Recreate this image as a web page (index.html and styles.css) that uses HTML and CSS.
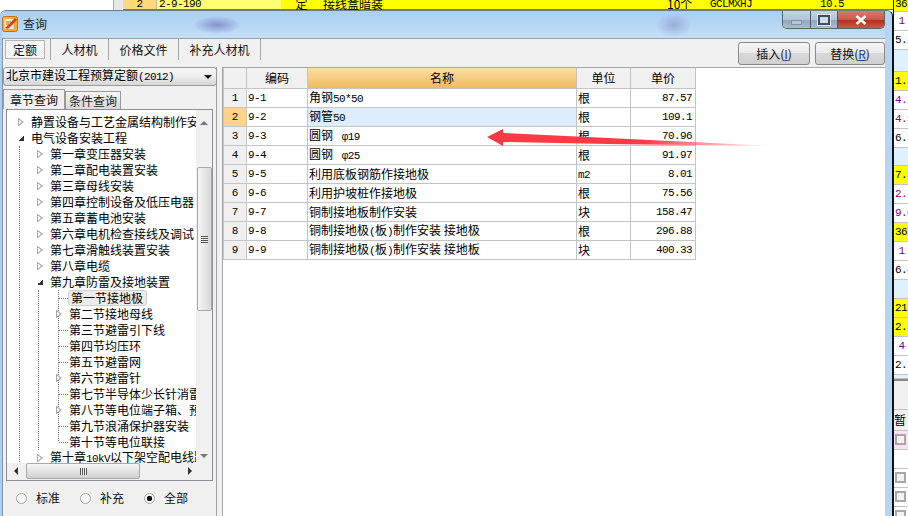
FILE: index.html
```html
<!DOCTYPE html>
<html lang="zh-CN">
<head>
<meta charset="utf-8">
<title>查询</title>
<link rel="stylesheet" href="styles.css">
</head>
<body>
<div class="page">
  <div class="main">
    <div class="bgrow">
      <div class="bg-white"></div>
      <div class="bg-gray"></div>
      <div class="bg-yellow">
        <span class="b1 m">2</span><span class="b2 m">2-9-190</span><span class="b3">定</span><span class="b4">接线盒暗装</span><span class="b5">10个</span><span class="b6 m">GCLMXHJ</span><span class="b7 m">10.5</span>
      </div>
    </div>
    <div class="window">
      <div class="titlebar">
        <svg class="appicon" width="16" height="16" viewBox="0 0 16 16">
          <rect x="0.5" y="0.5" width="15" height="15" rx="2" fill="#f6ab35" stroke="#c07414"/>
          <rect x="2.5" y="3" width="9" height="10" fill="#fdeccb"/>
          <path d="M3 12 L13 2 L15 4 L6 13Z" fill="#d8431c"/>
          <path d="M4 6h5M4 8h3" stroke="#b86a10"/>
        </svg>
        <span class="title">查询</span>
        <div class="controls">
          <div class="ctl ctl-min"><i class="minbar"></i></div>
          <div class="ctl ctl-max"><i class="maxbox"></i></div>
          <div class="ctl ctl-close">
            <svg width="12" height="10" viewBox="0 0 12 10"><path d="M1.5 1 L10.5 9 M10.5 1 L1.5 9" stroke="#fff" stroke-width="2.6"/></svg>
          </div>
        </div>
      </div>
      <div class="client">
        <div class="toolbar">
          <div class="tabs">
            <div class="tab tab-on"><span class="focus">定额</span></div>
            <div class="tab t2">人材机</div>
            <div class="tab t3">价格文件</div>
            <div class="tab t4">补充人材机</div>
          </div>
          <div class="actions">
            <button class="btn b-ins">插入(<u>I</u>)</button>
            <button class="btn b-rep">替换(<u>R</u>)</button>
          </div>
        </div>
        <div class="content">
          <div class="left">
            <div class="combo"><span>北京市建设工程预算定额<b class="n">(2012)</b></span><i class="caret"></i></div>
            <div class="subtabs">
              <div class="subtab subtab-on">章节查询</div>
              <div class="subtab">条件查询</div>
            </div>
            <div class="treebox">
              <div class="treetop">
                <div class="tree">
                  <div class="row"><i class="tri"></i><span>静置设备与工艺金属结构制作安装工程</span></div>
                  <div class="row"><i class="tri open"></i><span>电气设备安装工程</span></div>
                  <div class="group">
                    <div class="row"><i class="tri"></i><span>第一章变压器安装</span></div>
                    <div class="row"><i class="tri"></i><span>第二章配电装置安装</span></div>
                    <div class="row"><i class="tri"></i><span>第三章母线安装</span></div>
                    <div class="row"><i class="tri"></i><span>第四章控制设备及低压电器</span></div>
                    <div class="row"><i class="tri"></i><span>第五章蓄电池安装</span></div>
                    <div class="row"><i class="tri"></i><span>第六章电机检查接线及调试</span></div>
                    <div class="row"><i class="tri"></i><span>第七章滑触线装置安装</span></div>
                    <div class="row"><i class="tri"></i><span>第八章电缆</span></div>
                    <div class="row"><i class="tri open"></i><span>第九章防雷及接地装置</span></div>
                    <div class="group g2">
                      <div class="g3">
                        <div class="row"><i class="leaf"></i><span class="sel">第一节接地极</span></div>
                        <div class="row"><i class="tri"></i><span>第二节接地母线</span></div>
                        <div class="row"><i class="leaf"></i><span>第三节避雷引下线</span></div>
                        <div class="row"><i class="leaf"></i><span>第四节均压环</span></div>
                        <div class="row"><i class="leaf"></i><span>第五节避雷网</span></div>
                        <div class="row"><i class="tri"></i><span>第六节避雷针</span></div>
                        <div class="row"><i class="leaf"></i><span>第七节半导体少长针消雷装置</span></div>
                        <div class="row"><i class="tri"></i><span>第八节等电位端子箱、预埋</span></div>
                        <div class="row"><i class="leaf"></i><span>第九节浪涌保护器安装</span></div>
                        <div class="row"><i class="leaf"></i><span>第十节等电位联接</span></div>
                      </div>
                    </div>
                    <div class="row"><i class="tri"></i><span>第十章<b class="n">10kV</b>以下架空配电线路</span></div>
                  </div>
                </div>
                <div class="vscroll">
                  <i class="arr-up"></i>
                  <div class="vthumb"><i class="grip-h"></i></div>
                  <i class="arr-down"></i>
                </div>
              </div>
              <div class="hscroll">
                <i class="arr-left"></i>
                <div class="hthumb"><i class="grip-v"></i></div>
                <i class="arr-right"></i>
              </div>
            </div>
            <div class="radios">
              <label class="radio"><i class="dot"></i>标准</label>
              <label class="radio"><i class="dot"></i>补充</label>
              <label class="radio"><i class="dot dot-on"></i>全部</label>
            </div>
          </div>
          <div class="tablepanel">
            <table class="grid">
              <colgroup><col class="c0"><col class="c1"><col class="c2"><col class="c3"><col class="c4"></colgroup>
              <thead>
                <tr><th></th><th>编码</th><th class="th-on">名称</th><th>单位</th><th>单价</th></tr>
              </thead>
              <tbody>
                <tr><td class="no">1</td><td class="m">9-1</td><td>角钢<b class="n">50*50</b></td><td>根</td><td class="pr">87.57</td></tr>
                <tr class="cur"><td class="no">2</td><td class="m">9-2</td><td class="nm">钢管<b class="n">50</b></td><td>根</td><td class="pr">109.1</td></tr>
                <tr><td class="no">3</td><td class="m">9-3</td><td>圆钢 <b class="n">&nbsp;φ19</b></td><td>根</td><td class="pr">70.96</td></tr>
                <tr><td class="no">4</td><td class="m">9-4</td><td>圆钢 <b class="n">&nbsp;φ25</b></td><td>根</td><td class="pr">91.97</td></tr>
                <tr><td class="no">5</td><td class="m">9-5</td><td>利用底板钢筋作接地极</td><td><b class="n">m2</b></td><td class="pr">8.01</td></tr>
                <tr><td class="no">6</td><td class="m">9-6</td><td>利用护坡桩作接地极</td><td>根</td><td class="pr">75.56</td></tr>
                <tr><td class="no">7</td><td class="m">9-7</td><td>铜制接地板制作安装</td><td>块</td><td class="pr">158.47</td></tr>
                <tr><td class="no">8</td><td class="m">9-8</td><td>铜制接地极<b class="n">(</b>板<b class="n">)</b>制作安装 接地极</td><td>根</td><td class="pr">296.88</td></tr>
                <tr><td class="no">9</td><td class="m">9-9</td><td>铜制接地极<b class="n">(</b>板<b class="n">)</b>制作安装 接地板</td><td>块</td><td class="pr">400.33</td></tr>
              </tbody>
            </table>
          </div>
        </div>
      </div>
    </div>
  </div>
  <div class="side">
    <div class="s h10 y">36</div>
    <div class="s h19 p c">1</div>
    <div class="s h19">5.2</div>
    <div class="s h22 lb"></div>
    <div class="s h19 y">1.5</div>
    <div class="s h19 p">4.1</div>
    <div class="s h19 p">4.5</div>
    <div class="s h19">6.5</div>
    <div class="s h18 lb"></div>
    <div class="s h19 y">7.8</div>
    <div class="s h19 p">2.7</div>
    <div class="s h19 p">9.0</div>
    <div class="s h19 y">36</div>
    <div class="s h19 p c">1</div>
    <div class="s h19">6.4</div>
    <div class="s h19 lb"></div>
    <div class="s h19 y">21</div>
    <div class="s h19 y">2.3</div>
    <div class="s h19 p c">4</div>
    <div class="s h19">2.7</div>
    <div class="s h4 lb"></div>
    <div class="s gap"></div>
    <div class="s ztxt">暂</div>
    <div class="s h19 pink"><i class="chk"></i></div>
    <div class="s h19"></div>
    <div class="s h19"><i class="chk"></i></div>
    <div class="s h19"><i class="chk"></i></div>
    <div class="s h19"><i class="chk"></i></div>
  </div>
  <svg class="arrow" width="908" height="516" viewBox="0 0 908 516">
    <defs>
      <linearGradient id="fade" x1="487" y1="0" x2="772" y2="0" gradientUnits="userSpaceOnUse">
        <stop offset="0" stop-color="#ff3a44"/>
        <stop offset="0.55" stop-color="#ff3a44"/>
        <stop offset="1" stop-color="#ff3a44" stop-opacity="0"/>
      </linearGradient>
    </defs>
    <polygon points="487,137 503,129 503,133 608,138 772,146 608,144 503,142 503,146" fill="url(#fade)"/>
  </svg>
</div>
</body>
</html>
```

FILE: styles.css
```css
* { box-sizing: border-box; }
html, body { margin: 0; padding: 0; }
body { width: 908px; height: 516px; overflow: hidden; background: #fff; color: #000;
  font: 12px/16px "Noto Sans CJK SC", "Liberation Sans", sans-serif; }
.m, .n { font-family: "Liberation Mono", monospace; font-size: 11px; letter-spacing: -0.6px; font-weight: 400; }
.page { position: relative; display: flex; width: 908px; height: 516px; overflow: hidden; }
.main { width: 893px; display: flex; flex-direction: column; }

.bgrow { display: flex; height: 10px; overflow: hidden; flex: none; }
.bg-white { width: 113px; }
.bg-gray { width: 10px; background: #e8e8e8; border-left: 1px solid #aaa; }
.bg-yellow { flex: 1; background: #ffff66; line-height: 8px; display: flex; white-space: nowrap; border-bottom: 1px solid #777; }
.bg-yellow span { display: block; }
.b1 { width: 33px; text-align: center; background: #ffd97a; }
.b2 { width: 125px; padding-left: 2px; background: #ffff70; border-left: 1px solid #bbb; }
.b3 { width: 41px; text-align: center; background: #ffff00; }
.b4 { width: 345px; padding-left: 1px; background: #ffff00; }
.b5 { width: 43px; background: #ffff00; }
.b6 { width: 80px; background: #ffff00; }
.b7 { flex: 1; text-align: right; padding-right: 49px; background: #ffff00; }

.window { flex: 1; min-height: 0; display: flex; flex-direction: column; padding: 0 7px 0 2px; overflow: hidden;
  border-radius: 6px 6px 0 0; border-top: 1px solid #6f7a86; border-right: 1px solid #111;
  background: linear-gradient(90deg, #aacff2 0, #bcd8f4 60%, #b5d5f5 100%); }
.titlebar { height: 27px; flex: none; display: flex; align-items: center;
  background:
    radial-gradient(ellipse 24px 9px at 215px 14px, rgba(90,90,170,.55), transparent),
    radial-gradient(ellipse 18px 12px at 672px 14px, rgba(110,110,180,.4), transparent),
    linear-gradient(180deg, #a9cff2, #c4ddf6); }
.appicon { margin: 0 5px 1px 0; flex: none; }
.title { color: #222; margin-bottom: 2px; }
.controls { margin-left: auto; display: flex; height: 18px; align-self: flex-start; border: 1px solid #566; border-top: 0; border-radius: 0 0 5px 5px; overflow: hidden; }
.ctl { height: 100%; display: flex; align-items: center; justify-content: center; }
.ctl-min { width: 28px; background: linear-gradient(180deg, #c3d5e8 0, #b0c4da 50%, #8fa6bf 51%, #a8bdd3 100%); border-right: 1px solid #556; }
.ctl-max { width: 27px; background: linear-gradient(180deg, #c3d5e8 0, #b0c4da 50%, #8fa6bf 51%, #a8bdd3 100%); border-right: 1px solid #556; }
.ctl-close { width: 46px; background: linear-gradient(180deg, #d87a6c 0, #cd5a4c 50%, #b22c1e 51%, #cc5a48 100%); }
.minbar { width: 11px; height: 5px; margin-top: 5px; border: 1px solid #7e92a8; background: #b5c6d8; }
.maxbox { width: 12px; height: 10px; border: 2px solid #3e4c5c; background: #cfdce8; box-shadow: 0 0 0 1px #dde6ef; }

.client { flex: 1; min-height: 0; background: #f0f0f0; border-left: 1px solid #8b95a0; display: flex; flex-direction: column; }
.toolbar { height: 29px; flex: none; display: flex; justify-content: space-between; border-top: 1px solid #9aa3ad; }
.tabs { display: flex; padding-top: 0; height: 22px; align-items: stretch; }
.tab { display: flex; align-items: center; justify-content: center; border-right: 1px solid #a8a8a8; height: 21px; color: #111; }
.tab-on { width: 48px; padding-left: 2px; justify-content: flex-start; background: #f0f0f0; }
.focus { display: block; width: 40px; height: 19px; text-align: center; line-height: 18px; border: 1px solid #b4b4b4; background: repeating-conic-gradient(#fff 0 25%, #ececec 0 50%) 0 0 / 2px 2px; }
.t2 { width: 58px; }
.t3 { width: 70px; }
.t4 { width: 82px; }
.actions { display: flex; gap: 5px; padding-top: 3px; }
.btn { height: 23px; padding: 0; border: 1px solid #8a8a8a; border-radius: 3px; font: inherit; color: #111;
  background: linear-gradient(180deg, #f4f4f4 0, #ebebeb 48%, #d8d8d8 50%, #cfcfcf 100%); }
.btn u { color: #1a3f9a; }
.b-ins { width: 72px; }
.b-rep { width: 70px; }

.content { flex: 1; min-height: 0; display: flex; gap: 5px; }
.left { width: 214px; flex: none; display: flex; flex-direction: column; border-right: 1px solid #a0a0a0; }
.combo { height: 19px; flex: none; margin-right: -1px; border: 1px solid #9a9a9a; border-radius: 3px; display: flex; align-items: center; justify-content: space-between; padding: 0 4px 2px 2px;
  background: linear-gradient(180deg, #f6f6f6 0, #ececec 50%, #d6d6d6 100%); white-space: nowrap; }
.caret { width: 0; height: 0; margin-top: 2px; border: 4px solid transparent; border-top: 4px solid #111; border-bottom: 0; }
.subtabs { display: flex; margin: 3px 0 0 0; height: 20px; flex: none; align-items: flex-end; }
.subtab { width: 56px; height: 18px; text-align: center; line-height: 18px; border: 1px solid #9a9a9a; border-bottom: 0; background: linear-gradient(180deg, #f4f4f4, #d8d8d8); color: #222; }
.subtab-on { width: 62px; height: 20px; background: #f0f0f0; line-height: 19px; color: #111; }
.treebox { margin: 0 3px 0 3px; height: 372px; flex: none; border: 1px solid #8e8e96; background: #fff; display: flex; flex-direction: column; }
.treetop { flex: 1; min-height: 0; display: flex; }
.tree { flex: 1; min-width: 0; padding-top: 4px; overflow: hidden; background: #fff; }
.row { display: flex; align-items: center; height: 16px; padding-left: 11px; white-space: nowrap; flex: none; }
.group .row { padding-left: 17px; }
.group { margin-left: 12px; border-left: 1px dotted #777; }
.g2 { margin-left: 18px; }
.g3 { margin-left: 19px; padding-left: 1px; background: repeating-linear-gradient(180deg, #777 0 1px, transparent 1px 2px) no-repeat 0 0 / 1px calc(100% - 8px); }
.group .g3 .row { padding-left: 0; }
.tri { flex: none; position: relative; width: 6px; height: 9px; margin-right: 7px; background: #a8a8a8; clip-path: polygon(0 0, 100% 50%, 0 100%); }
.tri::after { content: ""; position: absolute; left: 1px; top: 2px; width: 3px; height: 5px; background: #fff; clip-path: polygon(0 0, 100% 50%, 0 100%); }
.g3 .tri { margin-left: -3px; }
.tri.open { width: 6px; height: 6px; background: linear-gradient(135deg, transparent 50%, #333 50%); clip-path: none; }
.tri.open::after { display: none; }
.leaf { flex: none; width: 9px; margin-right: 1px; border-top: 1px dotted #777; }
.sel { margin-left: -1px; padding: 0 3px 0 2px; height: 16px; line-height: 14px; background: #ececec; border: 1px solid #cfcfcf; border-radius: 3px; }
.vscroll { width: 16px; flex: none; background: #f0f0f0; position: relative; }
.vthumb { position: absolute; left: 1px; right: 0; top: 57px; height: 144px; border: 1px solid #a8a8a8; border-radius: 2px; background: linear-gradient(90deg, #f6f6f6, #d8d8d8); display: flex; align-items: center; justify-content: center; }
.grip-h { width: 7px; height: 7px; background: repeating-linear-gradient(180deg, #555 0 1px, #eee 1px 2px); }
.arr-up, .arr-down { position: absolute; left: 4px; width: 0; height: 0; border: 4px solid transparent; }
.arr-up { top: 11px; border-bottom: 4px solid #777; border-top: 0; }
.arr-down { bottom: 5px; border-top: 4px solid #777; border-bottom: 0; }
.hscroll { height: 17px; flex: none; background: #f0f0f0; position: relative; }
.hthumb { position: absolute; left: 19px; width: 114px; top: 0; height: 16px; border: 1px solid #a8a8a8; border-radius: 2px; background: linear-gradient(180deg, #f6f6f6, #d0d0d0); display: flex; align-items: center; justify-content: center; }
.grip-v { width: 7px; height: 7px; background: repeating-linear-gradient(90deg, #555 0 1px, #eee 1px 2px); }
.arr-left, .arr-right { position: absolute; top: 4px; width: 0; height: 0; border: 4px solid transparent; }
.arr-left { left: 7px; border-right: 4px solid #333; border-left: 0; }
.arr-right { right: 20px; border-left: 4px solid #333; border-right: 0; }
.radios { flex: 1; display: flex; padding: 9px 0 0 13px; }
.radio { width: 64px; display: flex; align-items: center; gap: 9px; height: 16px; color: #111; }
.dot { width: 11px; height: 11px; border-radius: 50%; border: 1px solid #a8a8a8; background: #f6f6f6; flex: none; }
.dot-on { background: radial-gradient(circle, #111 0 2.5px, #f6f6f6 3px); }

.tablepanel { flex: 1; min-width: 0; background: #fff; border: 1px solid #a8a8a8; border-bottom: 0; border-right: 0; }
.grid { table-layout: fixed; width: 472px; border-collapse: collapse; }
.c0 { width: 23px; } .c1 { width: 61px; } .c2 { width: 269px; } .c3 { width: 54px; } .c4 { width: 65px; }
.grid th { height: 20px; padding: 0; font-weight: 400; background: #f0f0f0; border: 1px solid #c4c4c4; border-top: 0; text-align: center; }
.grid .th-on { background: linear-gradient(180deg, #fbdfa6, #f1b95c); }
.grid td { height: 19px; padding: 0 0 0 1px; border: 1px solid #c4c4c4; white-space: nowrap; overflow: hidden; line-height: 16px; }
.grid .no { background: #f0f0f0; text-align: center; padding: 0; font-family: "Liberation Mono", monospace; font-size: 11px; }
.cur .no { background: #ffd38a; }
.cur .nm { background: #deedfc; }
.grid .pr { text-align: right; padding: 0 3px 0 0; font-family: "Liberation Mono", monospace; font-size: 11px; letter-spacing: -0.6px; }

.side { width: 15px; flex: none; display: flex; flex-direction: column; background: #fff; border-left: 1px solid #111; overflow: hidden; }
.s { flex: none; padding-left: 1px; border-bottom: 1px solid #c4c4c4; font-family: "Liberation Mono", monospace; font-size: 11px; letter-spacing: -0.6px; line-height: 18px; white-space: nowrap; overflow: hidden; }
.h10 { height: 12px; line-height: 8px; }
.h19 { height: 19px; }
.h18 { height: 18px; }
.h22 { height: 22px; }
.h4 { height: 4px; }
.y { background: #ffff00; }
.p { color: #800080; }
.c { text-align: center; }
.lb { background: #dff0ff; }
.gap { height: 31px; background: #f0f0f0; border-top: 2px solid #888; }
.ztxt { height: 21px; background: #f0f0f0; font-family: "Noto Sans CJK SC", sans-serif; font-size: 12px; line-height: 20px; padding: 0; letter-spacing: 0; }
.pink { background: #fbe0f6; }
.chk { display: block; width: 11px; height: 11px; margin: 3px 0 0 0; border: 2px solid #a8a8a8; background: #f2f2f2; }

.arrow { position: absolute; left: 0; top: 0; pointer-events: none; }
```
